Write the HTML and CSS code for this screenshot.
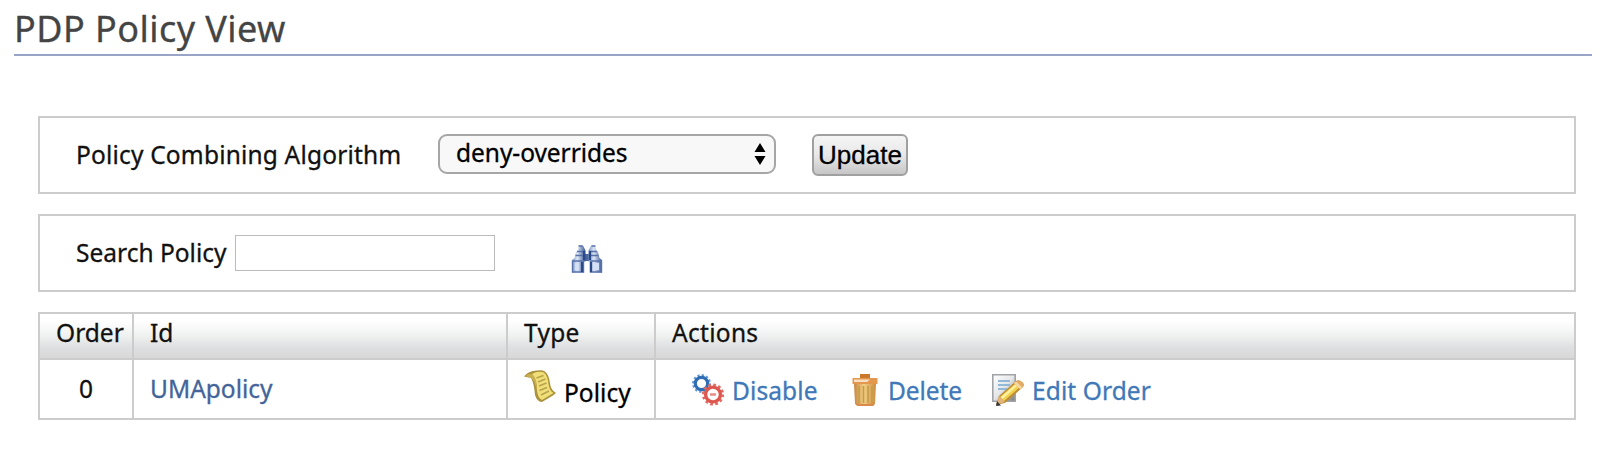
FILE: index.html
```html
<!DOCTYPE html>
<html lang="en">
<head>
<meta charset="utf-8">
<title>PDP Policy View</title>
<link rel="stylesheet" href="styles.css">
</head>
<body>
<h1 class="title"><span>PDP Policy View</span></h1>
<main class="work-area">
  <section class="panel">
    <label class="label-algorithm" for="algorithm">Policy Combining Algorithm</label>
    <div class="select" id="algorithm"><span>deny-overrides</span>
      <svg class="arrows" viewBox="0 0 12 24"><path d="M6 1 11.500 10H.5zM6 23 .5 14h11z"/></svg>
    </div>
    <button class="update">Update</button>
  </section>
  <section class="panel">
    <label class="label-search" for="search">Search Policy</label>
    <input class="search" id="search" type="text">
    <svg class="binoculars" viewBox="0 0 32 28">
      <defs>
        <linearGradient id="lens"><stop offset="0" stop-color="#7f98c5"/><stop offset=".4" stop-color="#dce6f6"/><stop offset="1" stop-color="#3a5796"/></linearGradient>
      </defs>
      <path d="M13 9h6v7h-6z" fill="#4c689f"/>
      <path d="M8 .5h4l2.500 5v11H13v11H1V15l2.500-2L5 7l2-2z" fill="url(#lens)"/>
      <path d="M20 .5h4l1 4.500 2 2 1.500 6 2.500 2v12.500H19v-11h-1.500v-11z" fill="url(#lens)"/>
      <path d="M7.500 1h4M20.500 1h4M6 6.500h8M4.500 10.500h9M1.500 16h11.500M18 6.500h8M18.500 10.500h9M19 16h12" fill="none" stroke="#5872a9" stroke-width="1.500"/>
      <path d="M1.500 15.500v11.500h11V16M19.500 16v11h11V15.500" fill="none" stroke="#5872a9" stroke-width="1.400"/>
      <path d="M11 17v10M20 17v10M13 6v9M19 6v9" stroke="#294989" stroke-width="2.200"/>
      <path d="M4 18h4v7H4zM23 18h5v7h-5z" fill="#d4e0f6"/>
    </svg>
  </section>
  <table class="policies">
    <colgroup><col class="col-order"><col class="col-id"><col class="col-type"><col></colgroup>
    <thead><tr><th>Order</th><th>Id</th><th class="t-type">Type</th><th class="t-actions">Actions</th></tr></thead>
    <tbody><tr>
      <td><div class="cell order">0</div></td>
      <td><div class="cell"><a class="policy-link">UMApolicy</a></div></td>
      <td><div class="cell type">
        <svg class="scroll" viewBox="0 0 32 32">
          <path d="M0 6.500Q4 1 13 .5q5-1 8 1 4 3 5 12 1 7 6 9.500l-3 2.500L18 32q-5 0-7-7-1-12-4-17z" fill="#ab923c"/>
          <path d="M8 4Q14 .500 20 2.500q4 4 4.500 11.500 1 7 5 9L18 30q-4-2-5-9Q13 9 8 4z" fill="#f0df78"/>
          <path d="M1 6q5-3.500 8-1 4 4 3.500 14Q10 8 5 7z" fill="#c9b053"/>
          <path d="m12.500 8 7-2.500M14 12l7.500-3M15 16l7.500-3M15.500 20.500l7.500-3M17 25l8-4" stroke="#b8a24c" stroke-width="1.400"/>
        </svg><span class="t-policy">Policy</span></div></td>
      <td><div class="cell actions">
        <a class="action"><svg class="icon" viewBox="0 0 32 32">
          <circle cx="9.500" cy="9.500" r="8.200" fill="none" stroke="#6a9dd0" stroke-width="2.600" stroke-dasharray="2.300 1.990"/>
          <circle cx="9.500" cy="9.500" r="6.200" fill="#fff" stroke="#2f6db4" stroke-width="3.200"/>
          <circle cx="21" cy="20.500" r="9.800" fill="none" stroke="#e16b64" stroke-width="2.600" stroke-dasharray="2.700 2.430"/>
          <circle cx="21" cy="20.500" r="7.400" fill="#fff" stroke="#de574e" stroke-width="3.400"/>
          <path d="M18 20.500h6" stroke="#e88b86" stroke-width="2.500"/>
        </svg><span class="t-disable">Disable</span></a>
        <a class="action"><svg class="icon" viewBox="0 0 32 32">
          <defs><linearGradient id="bin"><stop stop-color="#c98540"/><stop offset=".45" stop-color="#f2cf85"/><stop offset="1" stop-color="#cf8a40"/></linearGradient></defs>
          <path d="M11 0h10v4H11z" fill="#cb792b"/>
          <path d="M5 10h22l-1 19q-.5 3-3 3H9.500q-3 0-3.500-3z" fill="url(#bin)"/>
          <path d="M10 12v17M14.500 12v17M19 12v17M23 12v17" stroke="#c29e4a" stroke-width="1.600"/>
          <path d="M6 29q9 2 20 0l-2 3H9z" fill="#d98a4c"/>
          <path d="M3.500 4h25v6h-25z" fill="#e2994f"/><path d="M5 5.500h16l-3 2.500H5z" fill="#fae0c3"/>
        </svg><span class="t-delete">Delete</span></a>
        <a class="action"><svg class="icon" viewBox="0 0 32 32">
          <defs><linearGradient id="sheet" x2="1" y2="1"><stop stop-color="#fff"/><stop offset=".5" stop-color="#e4e6e8"/><stop offset="1" stop-color="#757575"/></linearGradient></defs>
          <path d="M.8.800h22.400v26.400H.8z" fill="url(#sheet)" stroke="#a1a4a7" stroke-width="1.600"/>
          <path d="M6 7h12M6 11h12M6 15h9" stroke="#92b9da" stroke-width="2"/>
          <path d="m4 31 3-9L24 7q3-2 6 1 3 2 1 5L13 29z" fill="#c08c36"/>
          <path d="M8 23 24 9l4 4-16 14z" fill="#f0d24e"/><path d="m9 23 15-13 1.500 1.500L10.500 25z" fill="#fff2a2"/>
          <path d="m22 9 3-2q3-1 5 1t1 5l-3 2z" fill="#e3ab64"/><path d="m22 9 2-1.500 6 6-2 1.500z" fill="#f8d9a8"/>
          <path d="m4 31 3-9 6 6z" fill="#e2b47a"/><path d="m4 32 1-5 4 4.500z" fill="#383838"/>
        </svg><span class="t-edit">Edit Order</span></a>
      </div></td>
    </tr></tbody>
  </table>
</main>
</body>
</html>
```
FILE: styles.css
```css
* { box-sizing: border-box; }
body { margin: 0; background: #fff; color: #111; font: 24.5px/36px "Noto Sans", sans-serif; -webkit-text-stroke: .3px currentColor; }
.title { margin: 0 8px 0 14px; height: 56px; border-bottom: 2px solid #99a5c7; color: #444; font-size: 36px; font-weight: 400; line-height: 57px; letter-spacing: .45px; }
.work-area { margin: 60px 24px 0 38px; }
.panel { height: 78px; margin-bottom: 20px; border: 2px solid #ccc; display: flex; align-items: flex-start; padding: 16px 0 0 36px; white-space: nowrap; }
.label-algorithm { width: 362px; margin-top: 3px; letter-spacing: .18px; }
.select { width: 338px; height: 40px; border: 2px solid #a6a6a6; border-radius: 9px; background: #f8f8f8; color: #000; display: flex; align-items: center; justify-content: space-between; padding: 0 8px 2px 16px; letter-spacing: -.05px; }
.arrows { width: 12px; height: 24px; margin-top: 2px; }
.update { width: 96px; height: 42px; margin-left: 36px; padding: 0; border: 2px solid #a0a0a0; border-radius: 6px; background: linear-gradient(#f5f5f5, #e8e8e8 50%, #c6c6c6); color: #000; font: 26px/38px "Liberation Sans", sans-serif; }
.label-search { width: 159px; margin-top: 3px; }
.search { width: 260px; height: 36px; margin: 3px 0 0; border: 1px solid #bbb; background: #fff; }
.binoculars { width: 32px; height: 28px; margin: 13px 0 0 76px; }
.policies { width: 1538px; border-collapse: collapse; table-layout: fixed; }
.col-order { width: 94px; }
.col-id { width: 374px; }
.col-type { width: 148px; }
.policies th, .policies td { border: 2px solid #ccc; padding: 0 0 0 16px; text-align: left; font-weight: 400; white-space: nowrap; vertical-align: top; }
.policies th { height: 46px; padding-top: 1px; background: linear-gradient(#fff 15%, #eff1f0 50%, #dfe0e2 75%, #d8d8d8); }
.policies .t-type, .policies .t-actions { letter-spacing: .3px; }
.cell { height: 58px; display: flex; align-items: flex-start; padding-top: 11px; }
.order { justify-content: center; padding-right: 16px; }
.policy-link { color: #42649a; }
.type { padding-top: 9px; }
.scroll { width: 32px; height: 32px; margin-top: 1px; }
.t-policy { margin: 6px 0 0 8px; color: #000; letter-spacing: .05px; }
.actions { padding: 13px 0 0 20px; }
.action { display: flex; color: #4078b8; }
.icon { width: 32px; height: 32px; margin-top: 1px; flex: none; }
.t-disable, .t-edit { margin-left: 8px; letter-spacing: .1px; }
.t-disable { width: 117px; }
.t-delete { width: 104px; margin-left: 7px; letter-spacing: -.1px; }
```
